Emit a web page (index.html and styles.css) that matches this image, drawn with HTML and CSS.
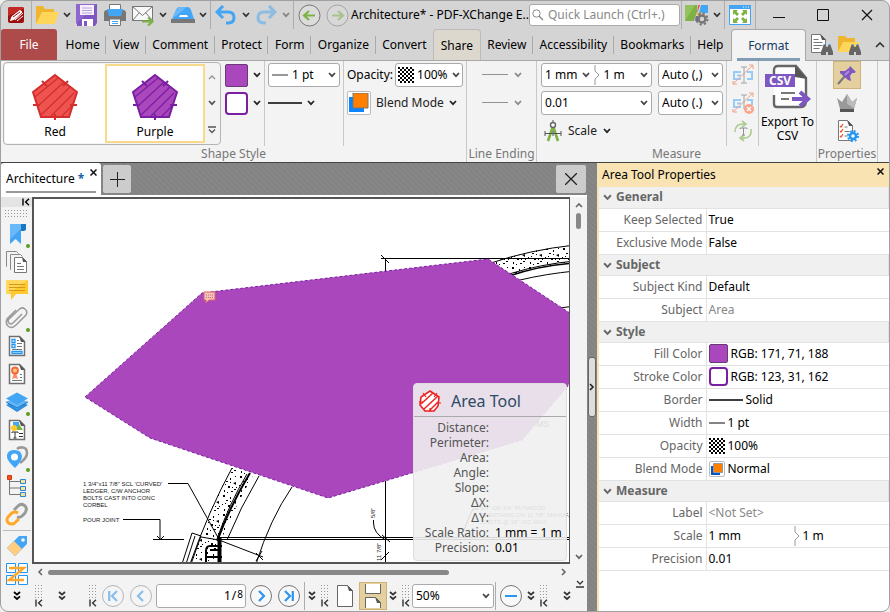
FILE: index.html
```
<!DOCTYPE html>
<html lang="en">
<head>
<meta charset="UTF-8" />
<meta name="viewport" content="width=device-width, initial-scale=1" />
<title>Architecture* - PDF-XChange Editor</title>
<link rel="stylesheet" href="styles.css">
</head>
<body>
<svg class="defs" width="0" height="0" aria-hidden="true">
	<symbol id="chev" viewBox="0 0 8 6"><path d="M1 1l3 3.200L7 1" fill="none" stroke="currentColor" stroke-width="1.700"/></symbol>
	<symbol id="more" viewBox="0 0 8 10"><path d="M1 1l3 2.600L7 1M1 5.400L4 8l3-2.600" fill="none" stroke="currentColor" stroke-width="1.800"/></symbol>
	<symbol id="collapse" viewBox="0 0 8 8"><path d="M1 .5v7M7 .8L3.600 4 7 7.200" fill="none" stroke="currentColor" stroke-width="1.400"/></symbol>
	<symbol id="lineend" viewBox="0 0 26 4"><path d="M0 1.500h26" stroke="#333"/></symbol>
	<symbol id="page" viewBox="0 0 24 24"><path d="M4.500 2.500h10l5 5v14h-15z" fill="#fff" stroke="#707070" stroke-width="1.500"/><path d="M14 2l6 6h-4z" fill="#555"/></symbol>
	<symbol id="binoc" viewBox="0 0 12 12"><path d="M2.500 1h2l1 2h1l1-2h2l2.500 7v3H7V8H5v3H0V8z" fill="#666"/><path d="M2.500 0h2M7.500 0h2" stroke="#42a5f5" stroke-width="2"/></symbol>
	<symbol id="area" viewBox="0 0 48 48">
		<path d="M24 3l22 17-8 25H10L2 20z" fill="var(--fill)" stroke="var(--line)" stroke-width="2"/>
		<path d="M4 25L27 6M7 34L33 10M10 43L39 15M20 44l23-23M31 44l11-11" stroke="var(--line)" stroke-width="1.300"/>
		<path d="M11 9l5 5M37 9l-5 5M2 33h7M39 33h7M24 42v6" stroke="var(--line)" stroke-width="2"/>
	</symbol>
	<symbol id="areatool" viewBox="0 0 22 22">
		<path d="M11 1l9 6-1 9-4 5H6l-5-6L2 7z" fill="#fff" stroke="#f02020" stroke-width="1.600"/>
		<path d="M2 14L14 3M5 19L19 6M11 20l8-8" stroke="#f02020" stroke-width="1.500"/>
		<path d="M4 3l3 4M18 3l-3 4M0 12h4M18 13h4M11 18v4" stroke="#f02020" stroke-width="1.200"/>
	</symbol>
	<pattern id="check" width="4" height="4" patternUnits="userSpaceOnUse"><path d="M0 0h2v2H0zM2 2h2v2H2z"/></pattern>
	<pattern id="concrete" width="17" height="19" patternUnits="userSpaceOnUse">
		<path d="M2 1h2v2H2zM9 3h1v2H9zM14 1h1v1h-1zM5 6h2v1H5zM12 8l3-1v3zM1 10h1v1H1zM7 11h2v2H7zM15 12h1v1h-1zM3 15h1v2H3zM10 16h2v1h-2zM13 14h2v1h-2zM6 17h1v1H6zM9 7h1v1H9zM4 9h1v1H4zM11 12h1v1h-1z"/>
	</pattern>
</svg>

<div class="window">
	<header class="titlebar">
		<button class="ico" aria-label="Application menu"><svg width="18" height="18" viewBox="0 0 18 18"><rect x="1" y="1" width="16" height="16" rx="2" fill="#9c1010"/><path d="M1 10V3q0-2 2-2h12q2 0 2 2z" fill="#c22a26"/><path d="M3.500 14.500l1.500-4 8-6 2 1.500-7.500 7zM8 14l8-7M10 15l6-5" fill="#fff" stroke="#fff"/><path d="M6 11l7-5" stroke="#a31515"/></svg></button>
		<i class="rule"></i>
		<button class="ico" aria-label="Open"><svg width="24" height="20" viewBox="0 0 24 20"><path d="M1 18V1h7l2 3h9v5z" fill="#f0b52e"/><path d="M1 19L7 7h17l-4 12z" fill="#ffd65a"/></svg></button>
		<button class="drop" aria-label="Open options"><svg width="8" height="6"><use href="#chev"/></svg></button>
		<button class="ico" aria-label="Save"><svg width="22" height="22" viewBox="0 0 22 22"><path d="M1 0h20v19l-2 3H1z" fill="#7e57c2"/><path d="M0 20V0h21z" fill="#8f68cf"/><path d="M4 1h14v10H4z" fill="#f5f0fb"/><path d="M6 4h10M6 6.500h10M6 9h10" stroke="#b9a4dc"/><path d="M6 15h11v7H6z" fill="#fff"/><path d="M8 17h3v5H8z" fill="#7e57c2"/></svg></button>
		<button class="ico" aria-label="Print"><svg width="22" height="22" viewBox="0 0 22 22"><path d="M5.500 6V.5h11V6" fill="#fff" stroke="#777"/><path d="M0 9q0-3 3-3h16q3 0 3 3v8H0z" fill="#777"/><path d="M3 5h16l-2 7H5z" fill="#42a5f5"/><path d="M5.500 15h11v6.500h-11z" fill="#fff" stroke="#777"/><path d="M8 17.500h6M8 19.500h6" stroke="#42a5f5"/></svg></button>
		<button class="ico" aria-label="Email"><svg width="24" height="22" viewBox="0 0 24 22"><path d="M1.500 2.500h20v14h-20z" fill="#f8f8f8" stroke="#777"/><path d="M1.500 2.500l10 9 10-9M1.500 16.500l7-8M21.500 16.500l-7-8" fill="none" stroke="#777"/><path d="M11 17.500h9M17 13.500l4.500 4-4.500 4" fill="none" stroke="#7cb342" stroke-width="2.200"/></svg></button>
		<button class="drop" aria-label="Email options"><svg width="8" height="6"><use href="#chev"/></svg></button>
		<button class="ico" aria-label="Scan"><svg width="24" height="18" viewBox="0 0 24 18"><path d="M1 13L5 4q1-3 4-3h7q3 0 4 3l3 9z" fill="#42a5f5"/><path d="M1 13L5 4q1-3 4-3h7z" fill="#69b8f7"/><path d="M9 9h7l1 2H8z" fill="#fff"/><path d="M0 13h24v4H0z" fill="#777"/></svg></button>
		<button class="drop" aria-label="Scan options"><svg width="8" height="6"><use href="#chev"/></svg></button>
		<i class="rule"></i>
		<button class="ico" aria-label="Undo"><svg width="22" height="20" viewBox="0 0 22 20"><path d="M8 1L2 7l6 6M2.500 7H13q6 0 6 5.500T13 18h-2" fill="none" stroke="#42a5f5" stroke-width="3"/></svg></button>
		<button class="drop" aria-label="Undo history"><svg width="8" height="6"><use href="#chev"/></svg></button>
		<button class="ico faded" aria-label="Redo"><svg width="22" height="20" viewBox="0 0 22 20"><path d="M14 1l6 6-6 6M19.500 7H9q-6 0-6 5.500T9 18h2" fill="none" stroke="#42a5f5" stroke-width="3"/></svg></button>
		<button class="drop faded" aria-label="Redo history"><svg width="8" height="6"><use href="#chev"/></svg></button>
		<i class="rule"></i>
		<button class="ico" aria-label="Previous view"><svg width="23" height="23" viewBox="0 0 23 23"><circle cx="11.500" cy="11.500" r="10.500" fill="#dcdcdc" stroke="#777"/><path d="M11 7l-5 4.500 5 4.500M6 11.500h11" fill="none" stroke="#7cb342" stroke-width="2.200"/></svg></button>
		<button class="ico faded" aria-label="Next view"><svg width="23" height="23" viewBox="0 0 23 23"><circle cx="11.500" cy="11.500" r="10.500" fill="#dcdcdc" stroke="#777"/><path d="M12 7l5 4.500-5 4.500M17 11.500H6" fill="none" stroke="#7cb342" stroke-width="2.200"/></svg></button>
		<h1 class="title">Architecture* - PDF-XChange E..</h1>
		<label class="search">
			<svg width="12" height="12" viewBox="0 0 12 12"><circle cx="4.500" cy="4.500" r="3.700" fill="none" stroke="#888"/><path d="M7 7l4 4" stroke="#888" stroke-width="1.500"/></svg>
			<input type="text" placeholder="Quick Launch (Ctrl+.)" aria-label="Quick Launch">
		</label>
		<i class="rule"></i>
		<button class="ico" aria-label="UI options"><svg width="26" height="22" viewBox="0 0 26 22"><path d="M1 1h12v7l-3 9H1z" fill="#7cb342"/><path d="M1 17V1h10z" fill="#93c25e"/><path d="M14 1h2l-3 9z" fill="#ef5350"/><path d="M17 1h7v8h-9z" fill="#42a5f5"/><path d="M13 10l5-2-3 7z" fill="#ffa726"/><path d="M12 12h2v5h-3z" fill="#7e57c2"/><circle cx="18" cy="15" r="3.500" fill="none" stroke="#777" stroke-width="2.500"/><circle cx="18" cy="15" r="5.500" fill="none" stroke="#777" stroke-width="2" stroke-dasharray="2.200 2.100"/></svg></button>
		<button class="drop" aria-label="UI menu"><svg width="8" height="6"><use href="#chev"/></svg></button>
		<i class="rule"></i>
		<button class="ico" aria-label="Full screen"><svg width="22" height="20" viewBox="0 0 22 20"><path d="M.5.5h21v19H.5z" fill="#fff" stroke="#42a5f5"/><path d="M0 0h22v4H0z" fill="#42a5f5"/><path d="M14 2h1M16.500 2h1M19 2h1" stroke="#fff"/><path d="M4 5h5L7.500 6.500 10 9 8 11 5.500 8.500 4 10zM18 5v5l-1.500-1.500L14 11l-2-2 2.500-2.500L13 5zM4 18v-5l1.500 1.500L8 12l2 2-2.500 2.500L9 18zM18 18h-5l1.500-1.500L12 14l2-2 2.500 2.500L18 13z" fill="#7cb342"/></svg></button>
		<i class="rule"></i>
		<button class="sys" aria-label="Minimize"><svg width="12" height="12"><path d="M0 8.500h12" stroke="#111"/></svg></button>
		<button class="sys" aria-label="Maximize"><svg width="12" height="12"><path d="M.5.5h11v11H.5z" fill="none" stroke="#111"/></svg></button>
		<button class="sys" aria-label="Close"><svg width="12" height="12"><path d="M1 1l10 10M11 1L1 11" stroke="#111" stroke-width="1.200"/></svg></button>
	</header>

	<nav class="tabs">
		<button class="tab file">File</button>
		<div class="tablist">
			<button class="tab">Home</button>
			<button class="tab">View</button>
			<button class="tab">Comment</button>
			<button class="tab">Protect</button>
			<button class="tab">Form</button>
			<button class="tab">Organize</button>
			<button class="tab plain">Convert</button>
			<button class="tab share">Share</button>
			<button class="tab">Review</button>
			<button class="tab">Accessibility</button>
			<button class="tab">Bookmarks</button>
			<button class="tab plain">Help</button>
		</div>
		<button class="tab format">Format</button>
		<button class="ico" aria-label="Find"><svg width="24" height="24" viewBox="0 0 24 24"><path d="M2.500 1.500h9l5 5v13h-14z" fill="#fff" stroke="#777"/><path d="M11 1l6 6h-4z" fill="#555"/><path d="M4.500 6.500h5M4.500 9.500h9M4.500 12.500h9M4.500 15.500h6" stroke="#777"/><use href="#binoc" x="12" y="11" width="12" height="12"/></svg></button>
		<button class="ico" aria-label="Search folder"><svg width="24" height="24" viewBox="0 0 24 24"><path d="M1 18V3h7l2 2h8v5z" fill="#f0b52e"/><path d="M1 19L6 9h17l-4 10z" fill="#ffd65a"/><use href="#binoc" x="12" y="11" width="12" height="12"/></svg></button>
		<button class="ico up" aria-label="Collapse ribbon"><svg width="10" height="8"><path d="M1 6l4-4 4 4" fill="none" stroke="#333" stroke-width="1.600"/></svg></button>
	</nav>

	<section class="ribbon">
		<div class="group">
			<div class="body">
				<div class="gallery">
					<button class="sample red"><svg width="48" height="48"><use href="#area"/></svg>Red</button>
					<button class="sample purple on"><svg width="48" height="48"><use href="#area"/></svg>Purple</button>
					<div class="steps">
						<button class="faded" aria-label="Up"><svg width="8" height="6" viewBox="0 0 8 6"><path d="M1 5l3-3 3 3" fill="none" stroke="#333" stroke-width="1.300"/></svg></button>
						<button aria-label="Down"><svg width="8" height="6"><use href="#chev"/></svg></button>
						<button aria-label="All styles"><svg width="8" height="8" viewBox="0 0 8 8"><path d="M0 1h8M1 3.500l3 3 3-3" fill="none" stroke="#555" stroke-width="1.300"/></svg></button>
					</div>
				</div>
				<div class="stack swatches">
					<button class="pick" aria-label="Fill color"><span class="swatch fill"></span><svg width="8" height="6"><use href="#chev"/></svg></button>
					<button class="pick" aria-label="Stroke color"><span class="swatch stroke"></span><svg width="8" height="6"><use href="#chev"/></svg></button>
				</div>
				<div class="stack lined">
					<div class="combo width">
						<svg width="16" height="2"><path d="M0 1h16" stroke="#333" stroke-width="1.200"/></svg>
						<select aria-label="Width"><option>1 pt</option></select>
						<svg class="arrow" width="8" height="6"><use href="#chev"/></svg>
					</div>
					<button class="pick" aria-label="Border style"><svg width="34" height="2"><path d="M0 1h34" stroke="#000" stroke-width="1.500"/></svg><svg width="8" height="6"><use href="#chev"/></svg></button>
				</div>
				<div class="stack lined">
					<div class="line"><label for="opacity">Opacity:</label>
						<div class="combo opacity">
							<svg width="16" height="16"><rect width="16" height="16" fill="#fff"/><rect width="16" height="16" fill="url(#check)"/></svg>
							<select id="opacity"><option>100%</option></select>
							<svg class="arrow" width="8" height="6"><use href="#chev"/></svg>
						</div>
					</div>
					<button class="pick"><span class="blend"><svg width="20" height="20" viewBox="0 0 20 20"><path d="M0 4h15v15H0z" fill="#0a84ff"/><path d="M4 0h15v15H4z" fill="#ff8000" stroke="#777"/></svg></span>Blend Mode<svg width="8" height="6"><use href="#chev"/></svg></button>
				</div>
			</div>
			<h2 class="caption">Shape Style</h2>
		</div>
		<div class="group ending">
			<div class="body">
				<div class="stack">
					<button class="pick" aria-label="Line start" disabled><svg width="26" height="4"><use href="#lineend"/></svg><svg width="8" height="6"><use href="#chev"/></svg></button>
					<button class="pick" aria-label="Line end" disabled><svg width="26" height="4"><use href="#lineend"/></svg><svg width="8" height="6"><use href="#chev"/></svg></button>
				</div>
			</div>
			<h2 class="caption">Line Ending</h2>
		</div>
		<div class="group measure">
			<div class="body">
				<div class="stack grow">
					<div class="combo">
						<select aria-label="Scale from"><option>1 mm</option></select>
						<svg class="arrow" width="8" height="6"><use href="#chev"/></svg>
						<svg class="split" width="6" height="20" viewBox="0 0 6 20"><path d="M1 0v6l4 4-4 4v6" fill="none" stroke="#999"/></svg>
						<select aria-label="Scale to"><option>1 m</option></select>
						<svg class="arrow" width="8" height="6"><use href="#chev"/></svg>
					</div>
					<div class="combo">
						<select aria-label="Precision"><option>0.01</option></select>
						<svg class="arrow" width="8" height="6"><use href="#chev"/></svg>
					</div>
					<button class="pick scale"><svg width="18" height="24" viewBox="0 0 18 24"><path d="M9 7L4 22M9 7l5 15" stroke="#7cb342" stroke-width="2.600"/><path d="M9 1v3M1 12v5M17 12v5M1 14.500h16M9 12v5" stroke="#555"/><circle cx="9" cy="6" r="2.500" fill="#fff" stroke="#666" stroke-width="1.400"/></svg>Scale<svg width="8" height="6"><use href="#chev"/></svg></button>
				</div>
				<div class="stack auto">
					<div class="combo"><select aria-label="Thousands separator"><option>Auto (,)</option></select><svg class="arrow" width="8" height="6"><use href="#chev"/></svg></div>
					<div class="combo"><select aria-label="Decimal separator"><option>Auto (.)</option></select><svg class="arrow" width="8" height="6"><use href="#chev"/></svg></div>
				</div>
				<div class="stack tools lined">
					<button aria-label="Set caption position" disabled><svg width="22" height="22" viewBox="0 0 22 22"><path d="M9 8H2v7h7M15 8h5v7h-5M5 11.500h4" fill="none" stroke="#42a5f5" stroke-width="2"/><path d="M1 20L21 1M17 1h4v4M1 17v3h4" fill="none" stroke="#ef5322"/><path d="M9 3h6M12 3v16M9 19h6" stroke="#555" fill="none"/></svg></button>
					<button aria-label="Reset caption position" disabled><svg width="22" height="22" viewBox="0 0 22 22"><path d="M9 8H2v7h7M15 8h5v5M5 11.500h4" fill="none" stroke="#42a5f5" stroke-width="2"/><path d="M1 20L21 1M17 1h4v4M1 17v3h4" fill="none" stroke="#ef5322"/><path d="M9 3h6M12 3v14" stroke="#555" fill="none"/><circle cx="17" cy="17" r="5" fill="#ff5a2a"/><path d="M15 15l4 4M19 15l-4 4" stroke="#fff" stroke-width="1.500"/></svg></button>
					<button aria-label="Rotate caption" disabled><svg width="22" height="22" viewBox="0 0 22 22"><path d="M3 12q0-8 8-8h2M10 1l4 3-4 3M19 9q1 10-9 9H8M12 15l-4 3 4 3" fill="none" stroke="#6aa82c" stroke-width="1.600"/><path d="M8 9V8h7v1M11.500 8v7M10 15h3" fill="none" stroke="#333"/></svg></button>
				</div>
				<button class="export lined">
					<svg width="48" height="46" viewBox="0 0 48 46"><path d="M10 13V6q0-4 4-4h18l10 12v22q0 7-5 7H13q-3 0-3-3v-9" fill="#fff" stroke="#666" stroke-width="2.400"/><path d="M31 2l12 13-12-2z" fill="#555"/><path d="M17 29h14M17 35h8" stroke="#777" stroke-width="2"/><path d="M28 35h16M36 28l8 7-8 7" fill="none" stroke="#7e57c2" stroke-width="4"/><path d="M1 10h30v13H1z" fill="#7e57c2"/><text x="16" y="21" class="csv">CSV</text></svg>
					<span>Export To<br>CSV</span>
				</button>
			</div>
			<h2 class="caption">Measure</h2>
		</div>
		<div class="group props-group">
			<div class="body">
				<div class="stack tight">
					<button class="ico on" aria-label="Keep tool selected"><svg width="20" height="20" viewBox="0 0 20 20"><path d="M1 19l7-8" stroke="#777" stroke-width="2"/><path d="M13 1l6 6-2 1-2 0-2 3 1 5-3-1-8-7 0-2 5 0 4-3z" fill="#7e57c2"/><path d="M12 6l-4 4" stroke="#a98be0" stroke-width="2"/></svg></button>
					<button class="ico" aria-label="Make default"><svg width="22" height="20" viewBox="0 0 22 20"><path d="M1 5l5 4 5-8 5 8 5-4-3 11H4z" fill="#999"/><path d="M11 1l5 8 5-4-3 10-7-4z" fill="#bbb"/><path d="M4 16h14v3H4z" fill="#555"/></svg></button>
					<button class="ico" aria-label="Properties pane"><svg width="24" height="24" viewBox="0 0 24 24"><path d="M3.500 1.500h9l5 5v15h-14z" fill="#fff" stroke="#777"/><path d="M12 1l6 6h-4z" fill="#555"/><path d="M5 7l1 1 2-3M5 12l1 1 2-3M5 17l1 1 2-3" fill="none" stroke="#ef5322" stroke-width="1.300"/><path d="M9.500 8h3M9.500 12.500h5M9.500 17h3" stroke="#777"/><circle cx="18" cy="17" r="3" fill="#fff" stroke="#2196f3" stroke-width="2.500"/><circle cx="18" cy="17" r="5" fill="none" stroke="#2196f3" stroke-width="2" stroke-dasharray="2 1.930"/></svg></button>
				</div>
			</div>
			<h2 class="caption">Properties</h2>
		</div>
	</section>

	<main class="main">
		<section class="viewer">
			<div class="doctabs">
				<div class="doctab"><span>Architecture</span><b>*</b><button aria-label="Close tab"><svg width="7" height="7"><path d="M.5.5l6 6M6.500.5l-6 6" stroke="#111" stroke-width="1.500"/></svg></button></div>
				<button class="square" aria-label="New tab"><svg width="15" height="15"><path d="M7.500 0v15M0 7.500h15" stroke="#222"/></svg></button>
				<button class="square last" aria-label="Close document"><svg width="12" height="12"><path d="M0 0l12 12M12 0L0 12" stroke="#222" stroke-width="1.300"/></svg></button>
			</div>
			<div class="work">
				<aside class="panes">
					<div class="fold"><svg width="8" height="8"><use href="#collapse"/></svg></div>
					<div class="grip"></div>
					<button class="dot" aria-label="Bookmarks"><svg width="24" height="24" viewBox="0 0 24 24"><path d="M14 2h7v6l-2 1h-5z" fill="#1976c5"/><path d="M5 2h11v20l-5.500-5L5 22z" fill="#42a5f5"/><path d="M5 2h11v5L5 17z" fill="#69b8f7"/></svg></button>
					<button aria-label="Thumbnails"><svg width="24" height="24" viewBox="0 0 24 24"><path d="M2 16.500h-.5v-15h10l2 2M6 19.500h-.5v-15h10l2 2" fill="none" stroke="#888"/><path d="M9.500 7.500h8l4 4v11h-12z" fill="#fff" stroke="#777"/><path d="M17 7l5 5h-4z" fill="#555"/><path d="M12 13.500h4M12 16.500h7M12 19.500h7" stroke="#777"/></svg></button>
					<button aria-label="Comments"><svg width="24" height="24" viewBox="0 0 24 24"><path d="M1 2h22v14H11l-5 6v-6H1z" fill="#fdc92f"/><path d="M1 2h22L3 16H1z" fill="#ffd85f"/><path d="M4 6.500h16M4 9.500h16M4 12.500h16" stroke="#d9971a"/></svg></button>
					<button class="dot" aria-label="Attachments"><svg width="24" height="24" viewBox="0 0 24 24"><path d="M17 8l-9 9q-2 2-4 0t0-4L14 3.500q3-3 6-.5t1 6L11 19q-4 4-7.500 1.500T2 13l9-9" fill="none" stroke="#999" stroke-width="1.500"/></svg></button>
					<button aria-label="Fields"><svg width="24" height="24" viewBox="0 0 24 24"><use href="#page" width="24" height="24"/><path d="M7 5.500h3v3H7zM7 10.500h3v3H7zM7 17.500h10v2H7z" fill="none" stroke="#2196f3" stroke-width="1.300"/><path d="M12 6.500h2M12 9.500h5M12 12.500h5M7 15.500h10" stroke="#777"/></svg></button>
					<button aria-label="Signatures"><svg width="24" height="24" viewBox="0 0 24 24"><use href="#page" width="24" height="24"/><path d="M9 11l-2 6 3-1 3 1-2-6" fill="#ff8a65"/><circle cx="10" cy="8.500" r="3" fill="#ffc977" stroke="#f4653b" stroke-width="1.800"/><path d="M15 12.500h2M15 15.500h2M7 18.500h10" stroke="#777"/></svg></button>
					<button class="dot" aria-label="Layers"><svg width="24" height="24" viewBox="0 0 24 24"><path d="M1 15l11-5 11 5-11 7z" fill="#2f8fdd"/><path d="M1 12l11-5 11 5-11 7z" fill="#64b5f6"/><path d="M1 12l11 6 11-6" fill="none" stroke="#1976c5"/><path d="M1 8.500l11-6 11 6-11 6z" fill="#42a5f5"/></svg></button>
					<button aria-label="Content"><svg width="24" height="24" viewBox="0 0 24 24"><use href="#page" width="24" height="24"/><path d="M8 4h6v6H8z" fill="#42a5f5"/><path d="M14 6l4 6h-7z" fill="#7cb342"/><circle cx="9" cy="10" r="3" fill="#ffc928"/><path d="M7 15v-1h6v1M10 14v6M8.500 20h3M14 15.500h4M14 18.500h4" stroke="#333" fill="none"/></svg></button>
					<button class="dot" aria-label="Destinations"><svg width="24" height="24" viewBox="0 0 24 24"><path d="M15 17q7-5 7-10t-4-5.500T12 3" fill="none" stroke="#999" stroke-width="2.600"/><path d="M10 22Q1 14 2 9t7.500-5T17 10q0 5-7 12z" fill="#42a5f5"/><circle cx="9.500" cy="11" r="3.500" fill="#fff"/></svg></button>
					<button aria-label="Structure"><svg width="24" height="24" viewBox="0 0 24 24"><path d="M4.500 5v15.500H16M5 7.500h11M5 14h11" fill="none" stroke="#777"/><path d="M2.500 1.500h4v4h-4z" fill="#f4511e" stroke="#d33b0c"/><path d="M15.500 5.500h5v4h-5zM15.500 12.500h5v4h-5zM15.500 18.500h5v4h-5z" fill="#ffe082" stroke="#1e88e5"/></svg></button>
					<button aria-label="Links"><svg width="24" height="24" viewBox="0 0 24 24"><path d="M9 8l4-4q3-3 6.500-.5T20 11l-3 3q-2 2-5 1" fill="none" stroke="#999" stroke-width="3"/><path d="M13 11q-3-2-6 0l-4 4q-2 3 0 5.500t6 1L14 17" fill="none" stroke="#ffa726" stroke-width="3"/></svg></button>
					<hr>
					<button aria-label="Tags"><svg width="24" height="24" viewBox="0 0 24 24"><path d="M2 14L14 2h8v8L10 22z" fill="#42a5f5"/><path d="M2 14l7-7 8 8-7 7z" fill="#ffcc80"/><circle cx="18" cy="6" r="1.800" fill="#fff"/></svg></button>
					<button aria-label="Order"><svg width="24" height="24" viewBox="0 0 24 24"><path d="M1.500 1.500h9v9h-9zM13.500 1.500h9v9h-9zM1.500 13.500h9v9h-9zM13.500 13.500h9v9h-9z" fill="#fff" stroke="#2196f3"/><path d="M4 6h15L4 18h15" fill="none" stroke="#ffa726" stroke-width="2.400"/></svg></button>
					<button aria-label="More panes"><svg width="8" height="10"><use href="#more"/></svg></button>
				</aside>

				<div class="column">
					<div class="scrollrow">
						<div class="canvas">
							<svg class="drawing" width="538" height="367" viewBox="32 197 538 367">
								<path d="M490 263q38-13 84-18v17q-30 2-65 13z" fill="url(#concrete)"/>
								<path d="M232 468q-25 45-42 96h22q12-36 41-89z" fill="url(#concrete)"/>
								<g fill="none" stroke="#000">
									<path d="M381 258.500h190M385.500 258v14M381 255l8 8M491 263q38-13 84-18M509 274q32-10 66-13M520 280q25-6 55-9M560 308l15-2"/>
									<path d="M509 276q32-11 66-13" stroke-width="1.500"/>
									<path d="M232 468q-23 42-42 96M247 474q-18 30-30 65M259 476q-19 32-32 64M292 487q-22 32-36 77"/>
									<path d="M250 473q-20 33-32 66" stroke-width="2"/>
									<path d="M182 564l10-31 9 3-10 28M186 564l9-28"/>
									<path d="M168 483.500h20l30 54M123 519.500h37v20M153 539.500h31M157 536l3.500 3.500 3.500-3.500"/>
									<path d="M201 537l18 3 44 17M256 553l7 7M262 551l-6 10"/>
									<path d="M219 537.500h352M219 539.500h352M204 562.500h367"/>
									<path d="M385.500 481v83M373.500 520v3q0 10 12 17M382 535l8 7M381 560l8-8"/>
									<path d="M222 546h-12q-4 0-4 5v12M222 557h-15M210 550h10" stroke-width="2"/>
									<path d="M219.500 537v27" stroke-width="4"/>
									<path d="M470 515l3-6h6M464 530l6-15"/>
								</g>
								<g class="note">
									<text x="83" y="486">1 3/4"x11 7/8" SCL 'CURVED'</text>
									<text x="83" y="493">LEDGER, C/W ANCHOR</text>
									<text x="83" y="500">BOLTS CAST INTO CONC</text>
									<text x="83" y="507">CORBEL</text>
									<text x="83" y="522">POUR JOINT</text>
									<text x="480" y="510">5/8" OR 3/4" PLYWOOD</text>
									<text x="480" y="517">SHEATHING ON 11 7/8" MANUF.</text>
									<text x="480" y="524">JOISTS @ 16" O/C MAX</text>
									<text transform="translate(375 518) rotate(-90)">5/8"</text>
									<text transform="translate(381 561) rotate(-90)">11 7/8"</text>
									<text x="536" y="427" class="big">MS</text>
								</g>
								<path d="M85 397L202 293 488 259 600 333 567 387 522 440 328 498 150 438z" fill="#ab47bc" stroke="#7b1fa2" stroke-dasharray="3 2"/>
								<path d="M204 292h11v8h-6l-3 3v-3h-2z" fill="#f3c3c0" stroke="#d9665f"/>
								<path d="M206 295h7M206 297.500h7" stroke="#d9665f" stroke-dasharray="1 1"/>
							</svg>
							<div class="hint">
								<h3><svg width="22" height="22"><use href="#areatool"/></svg>Area Tool</h3>
								<dl>
									<dt>Distance:</dt><dd></dd>
									<dt>Perimeter:</dt><dd></dd>
									<dt>Area:</dt><dd></dd>
									<dt>Angle:</dt><dd></dd>
									<dt>Slope:</dt><dd></dd>
									<dt>ΔX:</dt><dd></dd>
									<dt>ΔY:</dt><dd></dd>
									<dt>Scale Ratio:</dt><dd>1 mm = 1 m</dd>
									<dt>Precision:</dt><dd>0.01</dd>
								</dl>
							</div>
						</div>
						<div class="vscroll">
							<svg width="8" height="6" viewBox="0 0 8 6"><path d="M1 5l3-3 3 3" fill="none" stroke="#666" stroke-width="1.600"/></svg>
							<i class="thumb"></i>
							<svg width="8" height="6"><use href="#chev"/></svg>
						</div>
					</div>
					<div class="hscroll">
						<svg width="6" height="8" viewBox="0 0 6 8"><path d="M5 1L2 4l3 3" fill="none" stroke="#666" stroke-width="1.600"/></svg>
						<div class="track"><i class="thumb"></i></div>
						<svg width="6" height="8" viewBox="0 0 6 8"><path d="M1 1l3 3-3 3" fill="none" stroke="#666" stroke-width="1.600"/></svg>
					</div>
					<footer class="status">
						<div class="handle"><i class="grip"></i><svg width="8" height="8"><use href="#collapse"/></svg></div>
						<button class="more first" aria-label="More"><svg width="8" height="10"><use href="#more"/></svg></button>
						<div class="handle"><i class="grip"></i><svg width="8" height="8"><use href="#collapse"/></svg></div>
						<button class="round faded" aria-label="First page"><svg width="10" height="12" viewBox="0 0 10 12"><path d="M1.200 1v10M9 1L4 6l5 5" fill="none" stroke="#1e88e5" stroke-width="2.200"/></svg></button>
						<button class="round faded" aria-label="Previous page"><svg width="10" height="12" viewBox="0 0 10 12"><path d="M7 1L2 6l5 5" fill="none" stroke="#1e88e5" stroke-width="2.200"/></svg></button>
						<label class="pageno"><input type="text" value="1" aria-label="Page"><span>/</span><small>8</small></label>
						<button class="round" aria-label="Next page"><svg width="10" height="12" viewBox="0 0 10 12"><path d="M3 1l5 5-5 5" fill="none" stroke="#2b95f0" stroke-width="2.200"/></svg></button>
						<button class="round" aria-label="Last page"><svg width="10" height="12" viewBox="0 0 10 12"><path d="M1 1l5 5-5 5M8.800 1v10" fill="none" stroke="#2b95f0" stroke-width="2.200"/></svg></button>
						<i class="rule"></i>
						<button class="more" aria-label="More"><svg width="8" height="10"><use href="#more"/></svg></button>
						<div class="handle"><i class="grip"></i><svg width="8" height="8"><use href="#collapse"/></svg></div>
						<button class="ico" aria-label="Single page"><svg width="16" height="22" viewBox="0 0 16 22"><path d="M.5.5h10l5 5v16H.5z" fill="#fff" stroke="#666"/><path d="M10 0l6 6h-4z" fill="#555"/></svg></button>
						<button class="ico on" aria-label="Continuous"><svg width="18" height="24" viewBox="0 0 18 24"><path d="M1.500 0v9.500h15V0M1.500 24V13.500h10l5 5V24" fill="#fff" stroke="#666"/><path d="M11 13l6 6h-4z" fill="#555"/></svg></button>
						<button class="more" aria-label="More"><svg width="8" height="10"><use href="#more"/></svg></button>
						<div class="handle"><i class="grip"></i><svg width="8" height="8"><use href="#collapse"/></svg></div>
						<div class="combo zoom"><select aria-label="Zoom"><option>50%</option></select><svg class="arrow" width="8" height="6"><use href="#chev"/></svg></div>
						<i class="rule"></i>
						<button class="round" aria-label="Zoom out"><svg width="12" height="12"><path d="M0 6h12" stroke="#2b95f0" stroke-width="2"/></svg></button>
						<button class="more" aria-label="More"><svg width="8" height="10"><use href="#more"/></svg></button>
						<div class="handle"><i class="grip"></i><svg width="8" height="8"><use href="#collapse"/></svg></div>
						<button class="more last" aria-label="More"><svg width="8" height="10"><use href="#more"/></svg></button>
						<button class="tail" aria-label="Customize"><svg width="8" height="8" viewBox="0 0 8 8"><path d="M1 1l3 3 3-3M0 7h8" fill="none" stroke="#333" stroke-width="1.300"/></svg></button>
					</footer>
				</div>
			</div>
		</section>

		<div class="splitter"><button aria-label="Collapse panel"><svg width="6" height="8" viewBox="0 0 6 8"><path d="M1 1l3 3-3 3" fill="none" stroke="#222" stroke-width="1.600"/></svg></button></div>

		<section class="props">
			<header><h2>Area Tool Properties</h2><button aria-label="Close properties"><svg width="7" height="7"><path d="M.5.5l6 6M6.500.5l-6 6" stroke="#111" stroke-width="1.500"/></svg></button></header>
			<table>
				<colgroup><col class="names"><col></colgroup>
				<tbody>
					<tr class="head"><th colspan="2"><svg width="9" height="7"><use href="#chev"/></svg>General</th></tr>
					<tr><th>Keep Selected</th><td>True</td></tr>
					<tr><th>Exclusive Mode</th><td>False</td></tr>
				</tbody>
				<tbody>
					<tr class="head"><th colspan="2"><svg width="9" height="7"><use href="#chev"/></svg>Subject</th></tr>
					<tr><th>Subject Kind</th><td>Default</td></tr>
					<tr><th>Subject</th><td class="muted">Area</td></tr>
				</tbody>
				<tbody>
					<tr class="head"><th colspan="2"><svg width="9" height="7"><use href="#chev"/></svg>Style</th></tr>
					<tr><th>Fill Color</th><td><div class="value"><span class="swatch fill"></span>RGB: 171, 71, 188</div></td></tr>
					<tr><th>Stroke Color</th><td><div class="value"><span class="swatch stroke"></span>RGB: 123, 31, 162</div></td></tr>
					<tr><th>Border</th><td><div class="value"><svg width="34" height="2"><path d="M0 1h34" stroke="#000" stroke-width="1.500"/></svg>Solid</div></td></tr>
					<tr><th>Width</th><td><div class="value"><svg width="16" height="2"><path d="M0 1h16" stroke="#333" stroke-width="1.200"/></svg>1 pt</div></td></tr>
					<tr><th>Opacity</th><td><div class="value"><svg width="16" height="16"><rect width="16" height="16" fill="url(#check)"/></svg>100%</div></td></tr>
					<tr><th>Blend Mode</th><td><div class="value"><span class="blend"><svg width="12" height="12" viewBox="0 0 12 12"><path d="M0 3h9v9H0z" fill="#0057c2"/><path d="M2.500.5h9v9h-9z" fill="#ff8000" stroke="#999"/></svg></span>Normal</div></td></tr>
				</tbody>
				<tbody>
					<tr class="head"><th colspan="2"><svg width="9" height="7"><use href="#chev"/></svg>Measure</th></tr>
					<tr><th>Label</th><td class="muted">&lt;Not Set&gt;</td></tr>
					<tr><th>Scale</th><td><div class="value halves"><span>1 mm</span><svg width="6" height="20" viewBox="0 0 6 20"><path d="M1 0v6l4 4-4 4v6" fill="none" stroke="#999"/></svg><span>1 m</span></div></td></tr>
					<tr><th>Precision</th><td>0.01</td></tr>
				</tbody>
			</table>
		</section>
	</main>
</div>
</body>
</html>
```

FILE: styles.css
```
* {
	box-sizing: border-box;
}
body {
	margin: 0;
	background-color: #f0f0f0;
	color: #000;
	font: 12px/16px "Noto Sans", "Open Sans", sans-serif;
}
h1, h2, h3, dl, dd {
	margin: 0;
	font-size: 12px;
	font-weight: normal;
}
button, input, select {
	margin: 0;
	padding: 0;
	border: 0;
	background: none;
	color: inherit;
	font: inherit;
}
button {
	display: flex;
	align-items: center;
	justify-content: center;
	white-space: nowrap;
}
svg {
	display: block;
	flex: none;
}
select, input {
	appearance: none;
	flex: 1;
	min-width: 0;
	outline: 0;
}
.defs {
	position: absolute;
}
.faded, button:disabled {
	opacity: .5;
}
.window {
	display: flex;
	flex-direction: column;
	height: 100vh;
	overflow: hidden;
	border: 1px solid #a0a0a0;
	border-radius: 8px;
	background-color: #d4d4d4;
}

/* title bar */
.titlebar {
	display: flex;
	align-items: center;
	height: 28px;
	padding-left: 1px;
	flex: none;
}
.ico {
	width: 28px;
	height: 28px;
	flex: none;
}
.drop {
	width: 12px;
	height: 28px;
	flex: none;
	color: #333;
}
.rule {
	width: 1px;
	height: 28px;
	margin: 0 1px;
	flex: none;
	background-color: #adadad;
}
.title {
	flex: 1 0 auto;
	white-space: nowrap;
}
.search {
	display: flex;
	align-items: center;
	flex: 0 1 151px;
	min-width: 0;
	height: 22px;
	gap: 4px;
	padding: 0 2px;
	border: 1px solid #aaa;
	border-radius: 3px;
	background-color: #fff;
}
.search input::placeholder {
	color: #888;
	opacity: 1;
}
.sys {
	width: 44px;
	height: 28px;
	flex: none;
}

/* ribbon tabs */
.tabs {
	display: flex;
	height: 32px;
	flex: none;
	border-bottom: 1px solid #a8a8a8;
}
.tablist {
	display: flex;
	flex: 1;
	min-width: 0;
	padding: 0 1px 0 2px;
}
.tab {
	position: relative;
	flex: 1 1 auto;
	padding-top: 1px;
}
.tab::after {
	content: "";
	position: absolute;
	right: 0;
	top: 7px;
	height: 18px;
	border-right: 1px solid #aaa;
}
.tab.plain::after, .file::after, .share::after {
	display: none;
}
.file {
	flex: 0 0 56px;
	border-radius: 3px 3px 0 0;
	background-color: #ad4a4a;
	color: #fff;
}
.share {
	border: 1px solid #bbb;
	border-bottom: 0;
	border-radius: 4px 4px 0 0;
	background-color: #dcd8ce;
}
.format {
	flex: 0 0 75px;
	margin: 0 1px -1px 0;
	border: 1px solid #a8a8a8;
	border-bottom: 0;
	border-radius: 4px 4px 0 0;
	background-color: #f3f3f3;
	color: #143a66;
}
.format::after {
	left: 5px;
	right: 5px;
	top: auto;
	bottom: 0;
	height: 3px;
	border: 0;
	background-color: #829cb5;
}
.tabs .ico {
	height: 32px;
}
.tabs .up {
	width: 26px;
	padding-left: 8px;
}

/* ribbon */
.ribbon {
	display: flex;
	height: 102px;
	flex: none;
	background-color: #f3f3f3;
	border-bottom: 1px solid #444;
}
.group {
	display: flex;
	flex-direction: column;
	border-right: 1px solid #c8c8c8;
}
.body {
	display: flex;
	height: 85px;
}
.caption {
	text-align: center;
	color: #777;
}
.gallery {
	display: flex;
	width: 218px;
	height: 83px;
	margin: 1px 4px 0 2px;
	padding: 1px;
	border: 1px solid #b4b4b4;
	border-radius: 4px;
}
.sample {
	flex-direction: column;
	justify-content: flex-start;
	width: 100px;
	gap: 4px;
	padding-top: 6px;
	border: 2px solid #fff;
	background-color: #fff;
}
.sample.on {
	border-color: #f9d98a;
}
.red {
	--fill: #ef5350;
	--line: #d32f2f;
}
.purple {
	--fill: #ab47bc;
	--line: #7b1fa2;
}
.steps {
	display: flex;
	flex-direction: column;
	flex: 1;
	color: #555;
}
.steps button {
	flex: 1;
}
.stack {
	display: flex;
	flex-direction: column;
	gap: 4px;
	padding: 2px 3px 0;
}
.lined {
	border-left: 1px solid #c8c8c8;
}
.swatches {
	padding-left: 0;
}
.swatch {
	width: 23px;
	height: 23px;
	border: 1px solid #6a3a75;
	border-radius: 2px;
	background-color: #ab47bc;
}
.swatch.stroke {
	border: 2px solid #7b1fa2;
	border-radius: 4px;
	background-color: #fff;
}
.pick {
	gap: 5px;
	height: 24px;
	justify-content: flex-start;
	color: #222;
}
.line {
	display: flex;
	align-items: center;
	gap: 2px;
}
.combo {
	display: flex;
	align-items: center;
	gap: 4px;
	height: 24px;
	padding: 0 3px;
	border: 1px solid #aaa;
	border-radius: 3px;
	background-color: #fff;
}
.arrow {
	color: #444;
}
.width {
	width: 72px;
}
.opacity {
	width: 68px;
	gap: 3px;
	padding: 0 2px;
}
.blend {
	padding: 1px;
	border: 1px solid #bbb;
	border-radius: 2px;
	background-color: #fff;
}
.ending {
	width: 70px;
}
.ending .stack {
	padding-left: 15px;
}
.ending .pick {
	gap: 6px;
}
.measure {
	width: 280px;
}
.grow {
	flex: 1;
	padding-left: 4px;
}
.scale {
	gap: 6px;
	padding-left: 3px;
}
.auto {
	width: 71px;
}
.tools {
	width: 32px;
}
.tools button {
	height: 24px;
}
.export {
	flex-direction: column;
	width: 58px;
	gap: 5px;
	line-height: 14px;
}
.csv {
	font: bold 12px "Noto Sans", sans-serif;
	fill: #fff;
	text-anchor: middle;
}
.props-group {
	width: 61px;
}
.tight {
	gap: 0;
	padding: 0;
	margin: 0 auto;
}
.on.ico {
	border: 1px solid #cdb27a;
	background-color: #e4cf9f;
}

/* document area */
.main {
	display: flex;
	flex: 1;
	min-height: 0;
	background-color: #8a8a8a;
}
.viewer {
	display: flex;
	flex-direction: column;
	flex: 1;
	min-width: 0;
}
.doctabs {
	display: flex;
	height: 32px;
	flex: none;
	gap: 2px;
	background: repeating-linear-gradient(45deg, #838383 0 2px, #878787 2px 4px);
}
.doctab {
	display: flex;
	align-items: center;
	width: 100px;
	padding-left: 5px;
	border-radius: 3px 3px 0 0;
	background: linear-gradient(#999, #999) 5px 28px / 90px 2px no-repeat #fff;
}
.doctab b {
	margin-left: 3px;
	color: #1565a8;
}
.doctab button {
	margin: 0 4px 14px auto;
}
.square {
	width: 28px;
	height: 28px;
	margin-top: 2px;
	border-radius: 2px;
	background-color: #ccc;
}
.square.last {
	width: 30px;
	margin-left: auto;
	margin-right: 1px;
}
.work {
	display: flex;
	flex: 1;
	min-height: 0;
	border-top: 2px solid #fff;
	background-color: #f3f3f3;
}
.panes {
	display: flex;
	flex-direction: column;
	width: 31px;
	flex: none;
}
.panes button {
	position: relative;
	height: 28px;
	flex: none;
}
.dot::after {
	content: "";
	position: absolute;
	right: 2px;
	bottom: 0;
	width: 4px;
	height: 4px;
	border-radius: 2px;
	background-color: #5a9e1c;
}
.panes hr {
	width: 28px;
	height: 1px;
	margin: 2px auto 1px;
	border: 0;
	flex: none;
	background-color: #bbb;
}
.panes button:last-child {
	height: 16px;
}
.fold {
	display: flex;
	justify-content: flex-end;
	padding: 1px 2px;
	background-color: #e4e4e4;
}
.grip {
	height: 10px;
	margin: 2px 3px 1px;
	flex: none;
	background: radial-gradient(#999 1px, transparent 1px) 0 0 / 3px 3px;
}
.column {
	display: flex;
	flex-direction: column;
	flex: 1;
	min-width: 0;
}
.scrollrow {
	display: flex;
	flex: 1;
	min-height: 0;
}
.canvas {
	position: relative;
	flex: 1;
	min-width: 0;
	overflow: hidden;
	border: 1px solid #555;
	border-width: 2px 1px 2px 2px;
	background-color: #fff;
}
.drawing {
	margin: -2px 0 0 -2px;
}
.note {
	font: 6px "Liberation Sans", sans-serif;
	fill: #222;
}
.big {
	font-size: 9px;
}
.hint {
	position: absolute;
	right: 2px;
	bottom: 1px;
	width: 154px;
	height: 178px;
	border: 1px solid #ddd;
	border-radius: 4px;
	background-color: rgba(240, 240, 240, .9);
}
.hint h3 {
	display: flex;
	align-items: center;
	gap: 10px;
	height: 33px;
	padding: 2px 5px 0;
	border-bottom: 1px solid #aaa;
	font-size: 16px;
	color: #2c4a63;
}
.hint dl {
	display: grid;
	grid-template-columns: 75px 1fr;
	grid-auto-rows: 15px;
	column-gap: 6px;
	padding-top: 3px;
	line-height: 15px;
	white-space: nowrap;
}
.hint dt {
	text-align: right;
	color: #555;
}
.vscroll {
	display: flex;
	flex-direction: column;
	align-items: center;
	width: 17px;
	padding: 5px 0 4px;
	gap: 5px;
	color: #666;
}
.thumb {
	width: 5px;
	height: 16px;
	margin-bottom: auto;
	border-radius: 3px;
	background-color: #888;
}
.hscroll {
	display: flex;
	align-items: center;
	height: 16px;
	flex: none;
	gap: 5px;
	padding: 0 20px 0 5px;
}
.track {
	flex: 1;
}
.track .thumb {
	display: block;
	width: 79%;
	height: 5px;
}
.status {
	display: flex;
	align-items: center;
	height: 31px;
	flex: none;
}
.handle {
	display: flex;
	flex-direction: column;
	align-items: center;
	width: 13px;
	gap: 1px;
	flex: none;
	color: #333;
}
.handle .grip {
	width: 9px;
	height: 14px;
	margin: 0;
}
.more {
	width: 12px;
	height: 28px;
	flex: none;
	color: #333;
}
.more.first {
	width: 41px;
	padding-right: 8px;
}
.more.last {
	margin-left: auto;
}
.round {
	width: 22px;
	height: 22px;
	margin: 0 3px;
	flex: none;
	border: 1px solid #777;
	border-radius: 50%;
	background-color: #f8f8f8;
}
.pageno {
	display: flex;
	align-items: center;
	flex: 1 1 86px;
	max-width: 90px;
	min-width: 0;
	height: 24px;
	gap: 1px;
	margin: 0 1px;
	padding-right: 2px;
	border: 1px solid #aaa;
	border-radius: 3px;
	background-color: #fff;
}
.pageno input {
	text-align: right;
}
.pageno small {
	font-size: 10px;
	margin-bottom: 3px;
}
.zoom {
	width: 82px;
	flex: none;
}
.tail {
	align-self: flex-start;
	width: 14px;
}
.splitter {
	display: flex;
	align-items: center;
	width: 10px;
	flex: none;
	background: repeating-linear-gradient(45deg, #838383 0 2px, #878787 2px 4px);
}
.splitter button {
	width: 8px;
	height: 60px;
	margin: 0 1px;
	border: 1px solid #666;
	border-radius: 3px;
	background-color: #ddd;
}

/* properties */
.props {
	width: 292px;
	flex: none;
	border-left: 2px solid #f9e3b3;
	background-color: #fff;
}
.props header {
	display: flex;
	justify-content: space-between;
	height: 24px;
	padding: 4px 5px 0 3px;
	background-color: #f9e3b3;
}
.props header button {
	height: 9px;
}
table {
	width: 100%;
	border-collapse: collapse;
	table-layout: fixed;
}
tr {
	height: 23px;
}
.names {
	width: 107px;
}
th, td {
	padding: 0 3px 0 2px;
	border-bottom: 1px solid #e2e2e2;
	text-align: left;
}
th {
	border-right: 1px solid #e2e2e2;
	text-align: right;
	font-weight: normal;
	color: #666;
}
.head {
	height: 21px;
	background-color: #f0f0f0;
}
.head th {
	text-align: left;
	font-weight: bold;
}
.head svg {
	display: inline-block;
	margin: 0 4px 0 2px;
}
.value {
	display: flex;
	align-items: center;
	gap: 3px;
}
.value .swatch {
	width: 19px;
	height: 19px;
}
.halves span:first-child {
	width: 82px;
}
.muted {
	color: #888;
}
```
